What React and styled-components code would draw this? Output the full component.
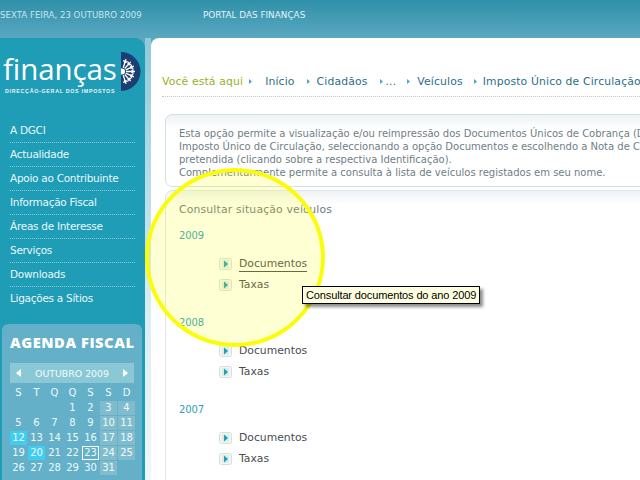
import React from 'react';
import styled, { createGlobalStyle } from 'styled-components';

const Global = createGlobalStyle`
  html, body { margin: 0; padding: 0; width: 640px; height: 480px; overflow: hidden; background: #fff; }
  body { font-family: "DejaVu Sans", sans-serif; }
  #root { width: 640px; height: 480px; }
`;
const Page = styled.div`
  position: relative; width: 640px; height: 480px; overflow: hidden;
  background: linear-gradient(180deg, #2f90a9 0, #5aa8c0 38px, #62adc4 60px, #e8f4f9 480px);
`;
const TopBar = styled.header`
  height: 38px; display: flex; align-items: flex-start; padding-top: 9px; box-sizing: border-box;
  line-height: 13px; color: #c4e6ee; white-space: nowrap;
`;
const DateText = styled.div` width: 203px; flex: none; font-size: 8.65px; `;
const PortalText = styled.div` color: #e4f4f8; font-size: 8.85px; `;
const Body = styled.div` display: flex; height: 442px; `;
const Sidebar = styled.aside`
  width: 145px; flex: none; background: #1f9cb6; border-radius: 0 10px 0 0; box-sizing: border-box;
  display: flex; flex-direction: column; padding-top: 12px; overflow: hidden;
`;
const Logo = styled.div` display: flex; padding-left: 3px; height: 69px; box-sizing: border-box; `;
const LogoWords = styled.div` width: 116px; flex: none; padding-top: 2px; `;
const LogoName = styled.div`
  font-family: "Open Sans", sans-serif; font-weight: 400; font-size: 29.5px; line-height: 34px; height: 34px; color: #fff; letter-spacing: -0.1px;
`;
const LogoSub = styled.div`
  font-family: "Liberation Sans", sans-serif; font-weight: 700; font-size: 5.3px; line-height: 8px; color: #e6f6fa; letter-spacing: .72px; padding-left: 2px; margin-top: 1px; white-space: nowrap;
`;
const Emblem = styled.svg` width: 20px; height: 39px; margin: 2px 0 0 2px; flex: none; `;
const Menu = styled.nav` display: flex; flex-direction: column; padding: 0 10px; `;
const MenuItem = styled.a`
  height: 24px; line-height: 22px; box-sizing: border-box; font-size: 10.5px; letter-spacing: -.28px; color: #e8f8fb; white-space: nowrap;
  border-bottom: 1px dotted #8accdb;
  &:last-child { border-bottom: none; }
`;
const Agenda = styled.section`
  margin: 13px 0 0 2px; width: 140px; flex: 1; background: #64b0c8; border-radius: 6px 6px 0 0; box-sizing: border-box; padding: 7px 8px 0;
`;
const AgendaTitle = styled.h2`
  margin: 0; font-family: "Open Sans", sans-serif; font-weight: 800; font-size: 14.7px; line-height: 22px; color: #fff; text-align: center; letter-spacing: .55px; white-space: nowrap;
`;
const MonthBar = styled.div`
  margin-top: 10px; height: 20px; background: #8ac8d6; display: flex; align-items: center; justify-content: space-between; padding: 0 6px; color: #f2fbfd; font-size: 9.4px;
`;
const Arrow = styled.svg` width: 6px; height: 8px; `;
const Grid = styled.div`
  display: grid; grid-template-columns: repeat(7, 17px); grid-auto-rows: 14px; gap: 1px 1px; margin-top: 3px;
`;
const Cell = styled.div`
  font-size: 10px; line-height: 14px; text-align: center; box-sizing: border-box; color: #eefafc;
  background: ${p => p.$today ? '#3fcdf2' : p.$weekend ? '#81bccd' : 'transparent'};
  ${p => p.$box ? 'border: 1px solid #fff; line-height: 12px;' : ''}
`;
const Strip = styled.div`
  width: 6px; flex: none; background: linear-gradient(180deg, #8ecadb 0, #d8edf4 60%, #eef7fb 100%);
`;
const Main = styled.main`
  flex: 1; min-width: 0; background: #fff; border-radius: 8px 0 0 0; padding: 0 0 0 11px; overflow: hidden;
`;
const Crumbs = styled.div`
  height: 59px; margin-right: -30px; box-sizing: border-box; padding: 36px 0 7px; display: flex; align-items: center; white-space: nowrap;
  font-size: 10.8px; line-height: 14px; letter-spacing: .15px; color: #2d6f86; border-bottom: 1px dotted #b9c9cf;
`;
const Here = styled.span` color: #95b31d; `;
const Sep = styled.svg` width: 3px; height: 5px; margin: 0 ${p => p.$r}px 0 ${p => p.$l}px; flex: none; `;
const InfoBox = styled.div`
  margin: 17px -40px 0 3px; height: 73px; border: 1px solid #d3e0e4; border-radius: 7px 0 0 7px; box-sizing: border-box; padding: 12px 13px;
  background: linear-gradient(180deg, #eef3f5 0, #fff 14px);
  font-size: 10px; line-height: 13px; color: #6f7e87; white-space: nowrap; overflow: hidden;
`;
const Panel = styled.div`
  margin: 3px -40px 0 3px; height: 300px; border: 1px solid #dde7ea; border-radius: 7px 0 0 0; box-sizing: border-box; padding: 12px 13px;
  background: linear-gradient(180deg, #eef3f5 0, #fff 14px);
`;
const PanelTitle = styled.div` font-size: 10.8px; line-height: 14px; letter-spacing: .18px; color: #6c7a80; `;
const Year = styled.div` font-size: 10px; line-height: 14px; letter-spacing: -.1px; font-weight: 500; color: #2e9fb8; margin-top: ${p => p.$first ? 12 : 24}px; `;
const Links = styled.ul` list-style: none; margin: 14px 0 0; padding: 0 0 0 40px; display: flex; flex-direction: column; gap: 7px; `;
const LinkRow = styled.li` display: flex; align-items: center; height: 14px; `;
const LinkIcon = styled.svg` width: 13px; height: 12px; margin-right: 7px; flex: none; `;
const LinkText = styled.a`
  font-size: 10.8px; line-height: 14px; color: #4a4c52;
  ${p => p.$active ? 'border-bottom: 1px solid #4a4c52;' : ''}
`;
const Tooltip = styled.div`
  position: absolute; left: 302px; top: 286px; height: 18px; box-sizing: border-box; padding: 0 3px; background: #ffffe1; border: 1px solid #000;
  font-family: "Liberation Sans", sans-serif; font-size: 11px; letter-spacing: -.13px; line-height: 16px; color: #000; white-space: nowrap; box-shadow: 3px 3px 3px rgba(0,0,0,.45);
`;
const Highlight = styled.div`
  position: absolute; left: 145px; top: 168px; width: 180px; height: 179px; box-sizing: border-box; border: 4px solid #fbfb0c; border-radius: 50%; background: rgba(255,255,0,.17); pointer-events: none;
`;

const Play = () => (
  <LinkIcon viewBox="0 0 13 12">
    <rect x=".5" y=".5" width="12" height="11" rx="2" fill="#f4f6f4" stroke="#d5dfd5" />
    <rect x="3" y="2" width="7" height="8" fill="#dcecec" />
    <path d="M5 2.5l4 3.5-4 3.5z" fill="#1f9fb4" />
  </LinkIcon>
);
const Chevron = ({ l, r }) => (
  <Sep viewBox="0 0 3 5" $l={l} $r={r}><path d="M0 0l3 2.5L0 5z" fill="#4aa7bd" /></Sep>
);

const weeks = [
  ['', '', '', '1', '2', '3', '4'],
  ['5', '6', '7', '8', '9', '10', '11'],
  ['12', '13', '14', '15', '16', '17', '18'],
  ['19', '20', '21', '22', '23', '24', '25'],
  ['26', '27', '28', '29', '30', '31', ''],
];
const years = [
  { y: '2009', active: true },
  { y: '2008' },
  { y: '2007' },
];
const rays = [-72, -48, -24, 0, 24, 48, 72];

export default function App() {
  return (
    <Page>
      <Global />
      <TopBar>
        <DateText>SEXTA FEIRA, 23 OUTUBRO 2009</DateText>
        <PortalText>PORTAL DAS FINANÇAS</PortalText>
      </TopBar>
      <Body>
        <Sidebar>
          <Logo>
            <LogoWords>
              <LogoName>finanças</LogoName>
              <LogoSub>DIRECÇÃO-GERAL DOS IMPOSTOS</LogoSub>
            </LogoWords>
            <Emblem viewBox="0 0 20 39">
              <path d="M0 0a19.5 19.5 0 0 1 0 39z" fill="#1c3f73" />
              <g stroke="#fff" strokeWidth="1.3" fill="none">
                {rays.map(a => (
                  <g key={a} transform={`rotate(${a} 1 19.5)`}>
                    <path d="M5 19.5H14M10 19.5l2.5-2M10 19.5l2.5 2" />
                  </g>
                ))}
              </g>
              <circle cx="1" cy="19.5" r="3" fill="#fff" />
            </Emblem>
          </Logo>
          <Menu>
            {['A DGCI', 'Actualidade', 'Apoio ao Contribuinte', 'Informação Fiscal', 'Áreas de Interesse', 'Serviços', 'Downloads', 'Ligações a Sítios'].map(m => (
              <MenuItem key={m}>{m}</MenuItem>
            ))}
          </Menu>
          <Agenda>
            <AgendaTitle>AGENDA FISCAL</AgendaTitle>
            <MonthBar>
              <Arrow viewBox="0 0 6 8"><path d="M5 0v8L0 4z" fill="#fff" /></Arrow>
              OUTUBRO 2009
              <Arrow viewBox="0 0 6 8"><path d="M1 0v8l5-4z" fill="#fff" /></Arrow>
            </MonthBar>
            <Grid>
              {['S', 'T', 'Q', 'Q', 'S', 'S', 'D'].map((d, i) => <Cell key={i}>{d}</Cell>)}
              {weeks.flat().map((d, i) => (
                <Cell
                  key={i}
                  $weekend={d && i % 7 >= 5}
                  $today={d === '12' || d === '20'}
                  $box={d === '23'}
                >{d}</Cell>
              ))}
            </Grid>
          </Agenda>
        </Sidebar>
        <Strip />
        <Main>
          <Crumbs>
            <Here>Você está aqui</Here><Chevron l={6} r={13} />
            Início<Chevron l={12} r={7} />
            Cidadãos<Chevron l={12} r={3} />
            ...<Chevron l={11} r={7} />
            Veículos<Chevron l={11} r={6} />
            Imposto Único de Circulação
          </Crumbs>
          <InfoBox>
            Esta opção permite a visualização e/ou reimpressão dos Documentos Únicos de Cobrança (DUC) do<br />
            Imposto Único de Circulação, seleccionando a opção Documentos e escolhendo a Nota de Cobrança<br />
            pretendida (clicando sobre a respectiva Identificação).<br />
            Complementarmente permite a consulta à lista de veículos registados em seu nome.
          </InfoBox>
          <Panel>
            <PanelTitle>Consultar situação veículos</PanelTitle>
            {years.map((g, i) => (
              <React.Fragment key={g.y}>
                <Year $first={i === 0}>{g.y}</Year>
                <Links>
                  <LinkRow><Play /><LinkText $active={g.active}>Documentos</LinkText></LinkRow>
                  <LinkRow><Play /><LinkText>Taxas</LinkText></LinkRow>
                </Links>
              </React.Fragment>
            ))}
          </Panel>
        </Main>
      </Body>
      <Highlight />
      <Tooltip>Consultar documentos do ano 2009</Tooltip>
    </Page>
  );
}
